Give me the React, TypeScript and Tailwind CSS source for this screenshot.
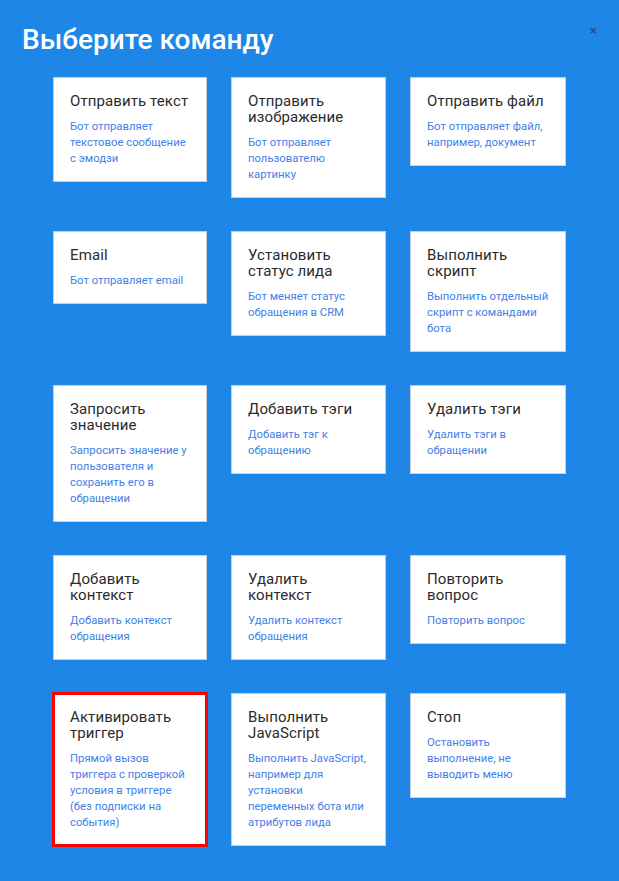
import React from 'react';

interface Command {
  title: string;
  desc: string;
  active?: boolean;
}

const COMMANDS: Command[] = [
  { title: 'Отправить текст', desc: 'Бот отправляет текстовое сообщение с эмодзи' },
  { title: 'Отправить изображение', desc: 'Бот отправляет пользователю картинку' },
  { title: 'Отправить файл', desc: 'Бот отправляет файл, например, документ' },
  { title: 'Email', desc: 'Бот отправляет email' },
  { title: 'Установить статус лида', desc: 'Бот меняет статус обращения в CRM' },
  { title: 'Выполнить скрипт', desc: 'Выполнить отдельный скрипт с командами бота' },
  { title: 'Запросить значение', desc: 'Запросить значение у пользователя и сохранить его в обращении' },
  { title: 'Добавить тэги', desc: 'Добавить тэг к обращению' },
  { title: 'Удалить тэги', desc: 'Удалить тэги в обращении' },
  { title: 'Добавить контекст', desc: 'Добавить контекст обращения' },
  { title: 'Удалить контекст', desc: 'Удалить контекст обращения' },
  { title: 'Повторить вопрос', desc: 'Повторить вопрос' },
  {
    title: 'Активировать триггер',
    desc: 'Прямой вызов триггера с проверкой условия в триггере (без подписки на события)',
    active: true,
  },
  {
    title: 'Выполнить JavaScript',
    desc: 'Выполнить JavaScript, например для установки переменных бота или атрибутов лида',
  },
  { title: 'Стоп', desc: 'Остановить выполнение, не выводить меню' },
];

function CommandCard({ title, desc, active }: Command) {
  return (
    <div
      className={
        'self-start bg-white border border-[#c9ced6] px-4 pt-[15px] pb-[14px] cursor-pointer ' +
        (active ? 'outline-[3px] outline-solid outline-[#ff0000] -outline-offset-2' : '')
      }
    >
      <div className="text-[15px] leading-4 font-normal text-[#2b2b2b] tracking-[0.1px]">{title}</div>
      <div className="mt-[10px] text-[11.3px] leading-4 text-[#4380e8]">{desc}</div>
    </div>
  );
}

export default function App() {
  return (
    <div
      className="min-h-[881px] w-full bg-[#1e86e6] relative"
      style={{ fontFamily: 'Roboto, "Noto Sans", sans-serif' }}
    >
      <button className="absolute right-[22px] top-[24px] text-[#294d7d] text-[13px] leading-none font-bold">
        ×
      </button>
      <h1 className="pl-[22px] pt-[23px] text-[28px] leading-[34px] font-medium text-white">Выберите команду</h1>
      <div className="pl-[53px] pt-[20px] pb-8 grid grid-cols-[154px_155px_156px] gap-x-[24px] gap-y-[33px]">
        {COMMANDS.map(c => (
          <CommandCard key={c.title} {...c} />
        ))}
      </div>
    </div>
  );
}
